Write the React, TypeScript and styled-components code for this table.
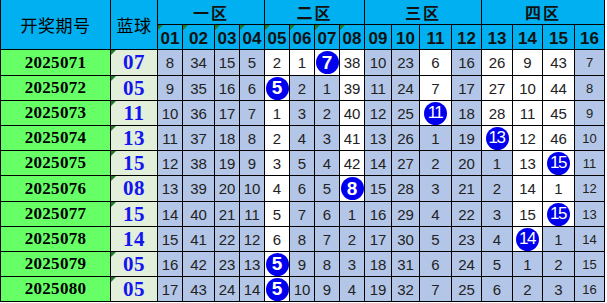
import React from "react";
import styled, { createGlobalStyle, css } from "styled-components";

const Global = createGlobalStyle`
  html, body { margin: 0; padding: 0; background: #ffffff; }
  body { font-family: "Liberation Sans", Arial, sans-serif; }
`;

const COLS = [110, 47, 25, 32, 25, 25, 25, 25, 25, 25, 27, 28, 32, 30, 31, 30, 32, 30];
const ROWS = [25, 25, 26, 25, 25, 25, 25, 26, 25, 25, 25, 25];

const Grid = styled.div`
  display: grid;
  grid-template-columns: ${COLS.map((c) => `${c}px`).join(" ")};
  grid-template-rows: ${ROWS.map((r) => `${r}px`).join(" ")};
  width: max-content;
  border-left: 1px solid #000;
`;

const Cell = styled.div`
  box-sizing: border-box;
  border-right: 1px solid #000;
  border-bottom: 1px solid #000;
  display: flex;
  align-items: center;
  justify-content: center;
  position: relative;
  overflow: hidden;
`;

const Marker = css`
  &::before {
    content: "";
    position: absolute;
    left: 0;
    top: 0;
    width: 0;
    height: 0;
    border-top: 5px solid #1f7a2a;
    border-right: 5px solid transparent;
  }
`;

const HeadCell = styled(Cell)<{ $rowSpan?: number; $colSpan?: number; $mark?: boolean }>`
  background: #00b0f0;
  color: #111;
  grid-row: span ${(p) => p.$rowSpan ?? 1};
  grid-column: span ${(p) => p.$colSpan ?? 1};
  ${(p) => p.$mark && Marker}
`;

const TitleText = styled.span`
  font-family: "Noto Sans CJK SC", sans-serif;
  font-size: 17px;
  font-weight: 400;
  letter-spacing: 0.5px;
  color: #000;
`;

const ZoneText = styled.span`
  font-family: "Noto Sans CJK SC", sans-serif;
  font-size: 16px;
  font-weight: 700;
  letter-spacing: 2px;
`;

const NumHead = styled.span`
  font-family: "Liberation Sans", Arial, sans-serif;
  font-size: 17px;
  font-weight: 700;
  margin-top: 3px;
`;

const PeriodCell = styled(Cell)`
  background: #66ff66;
  font-family: "Liberation Serif", "Times New Roman", serif;
  font-weight: 700;
  font-size: 17px;
  color: #000;
  letter-spacing: 0.3px;
`;

const BlueCell = styled(Cell)<{ $mark: boolean }>`
  background: #e2efda;
  font-family: "Liberation Serif", "Times New Roman", serif;
  font-weight: 700;
  font-size: 21px;
  color: #1414f0;
  letter-spacing: 0.5px;
  ${(p) => p.$mark && Marker}
`;

const DataCell = styled(Cell)<{ $white: boolean; $small: boolean }>`
  background: ${(p) => (p.$white ? "#ffffff" : "#b4c6e7")};
  font-family: "Liberation Sans", Arial, sans-serif;
  font-size: ${(p) => (p.$small ? "13px" : "15px")};
  color: #222;
`;

const Ball = styled.span<{ $two: boolean }>`
  width: 23px;
  height: 23px;
  border-radius: 50%;
  background: #0000ee;
  color: #fff;
  display: flex;
  align-items: center;
  justify-content: center;
  font-family: "Liberation Sans", Arial, sans-serif;
  font-size: ${(p) => (p.$two ? "17px" : "19px")};
  font-weight: ${(p) => (p.$two ? 400 : 700)};
  letter-spacing: ${(p) => (p.$two ? "-1.5px" : "0")};
  padding-right: ${(p) => (p.$two ? "1px" : "0")};
  box-sizing: border-box;
`;

type Row = { period: string; blue: string; values: number[]; hit: number };

const rows: Row[] = [
  { period: "2025071", blue: "07", values: [8, 34, 15, 5, 2, 1, 7, 38, 10, 23, 6, 16, 26, 9, 43, 7], hit: 7 },
  { period: "2025072", blue: "05", values: [9, 35, 16, 6, 5, 2, 1, 39, 11, 24, 7, 17, 27, 10, 44, 8], hit: 5 },
  { period: "2025073", blue: "11", values: [10, 36, 17, 7, 1, 3, 2, 40, 12, 25, 11, 18, 28, 11, 45, 9], hit: 11 },
  { period: "2025074", blue: "13", values: [11, 37, 18, 8, 2, 4, 3, 41, 13, 26, 1, 19, 13, 12, 46, 10], hit: 13 },
  { period: "2025075", blue: "15", values: [12, 38, 19, 9, 3, 5, 4, 42, 14, 27, 2, 20, 1, 13, 15, 11], hit: 15 },
  { period: "2025076", blue: "08", values: [13, 39, 20, 10, 4, 6, 5, 8, 15, 28, 3, 21, 2, 14, 1, 12], hit: 8 },
  { period: "2025077", blue: "15", values: [14, 40, 21, 11, 5, 7, 6, 1, 16, 29, 4, 22, 3, 15, 15, 13], hit: 15 },
  { period: "2025078", blue: "14", values: [15, 41, 22, 12, 6, 8, 7, 2, 17, 30, 5, 23, 4, 14, 1, 14], hit: 14 },
  { period: "2025079", blue: "05", values: [16, 42, 23, 13, 5, 9, 8, 3, 18, 31, 6, 24, 5, 1, 2, 15], hit: 5 },
  { period: "2025080", blue: "05", values: [17, 43, 24, 14, 5, 10, 9, 4, 19, 32, 7, 25, 6, 2, 3, 16], hit: 5 },
];

const lastHit: Record<number, number> = {};
rows.forEach((r, i) => {
  lastHit[r.hit] = i;
});
const extraWhite = new Set(["0-6"]);

const isWhite = (rowIdx: number, col: number) =>
  (lastHit[col] !== undefined && rowIdx <= lastHit[col]) || extraWhite.has(`${rowIdx}-${col}`);

const zones = ["一区", "二区", "三区", "四区"];
const nums = Array.from({ length: 16 }, (_, i) => String(i + 1).padStart(2, "0"));

export default function App() {
  return (
    <>
      <Global />
      <Grid>
        <HeadCell $rowSpan={2}>
          <TitleText>开奖期号</TitleText>
        </HeadCell>
        <HeadCell $rowSpan={2}>
          <TitleText>蓝球</TitleText>
        </HeadCell>
        {zones.map((z) => (
          <HeadCell key={z} $colSpan={4}>
            <ZoneText>{z}</ZoneText>
          </HeadCell>
        ))}
        {nums.map((n, i) => (
          <HeadCell key={n} $mark={i < 8}>
            <NumHead>{n}</NumHead>
          </HeadCell>
        ))}
        {rows.map((r, ri) => (
          <React.Fragment key={r.period}>
            <PeriodCell>{r.period}</PeriodCell>
            <BlueCell $mark={ri !== 7}>{r.blue}</BlueCell>
            {r.values.map((v, ci) => {
              const col = ci + 1;
              const hit = col === r.hit;
              return (
                <DataCell key={ci} $white={isWhite(ri, col)} $small={col === 16}>
                  {hit ? <Ball $two={v >= 10}>{v}</Ball> : v}
                </DataCell>
              );
            })}
          </React.Fragment>
        ))}
      </Grid>
    </>
  );
}
